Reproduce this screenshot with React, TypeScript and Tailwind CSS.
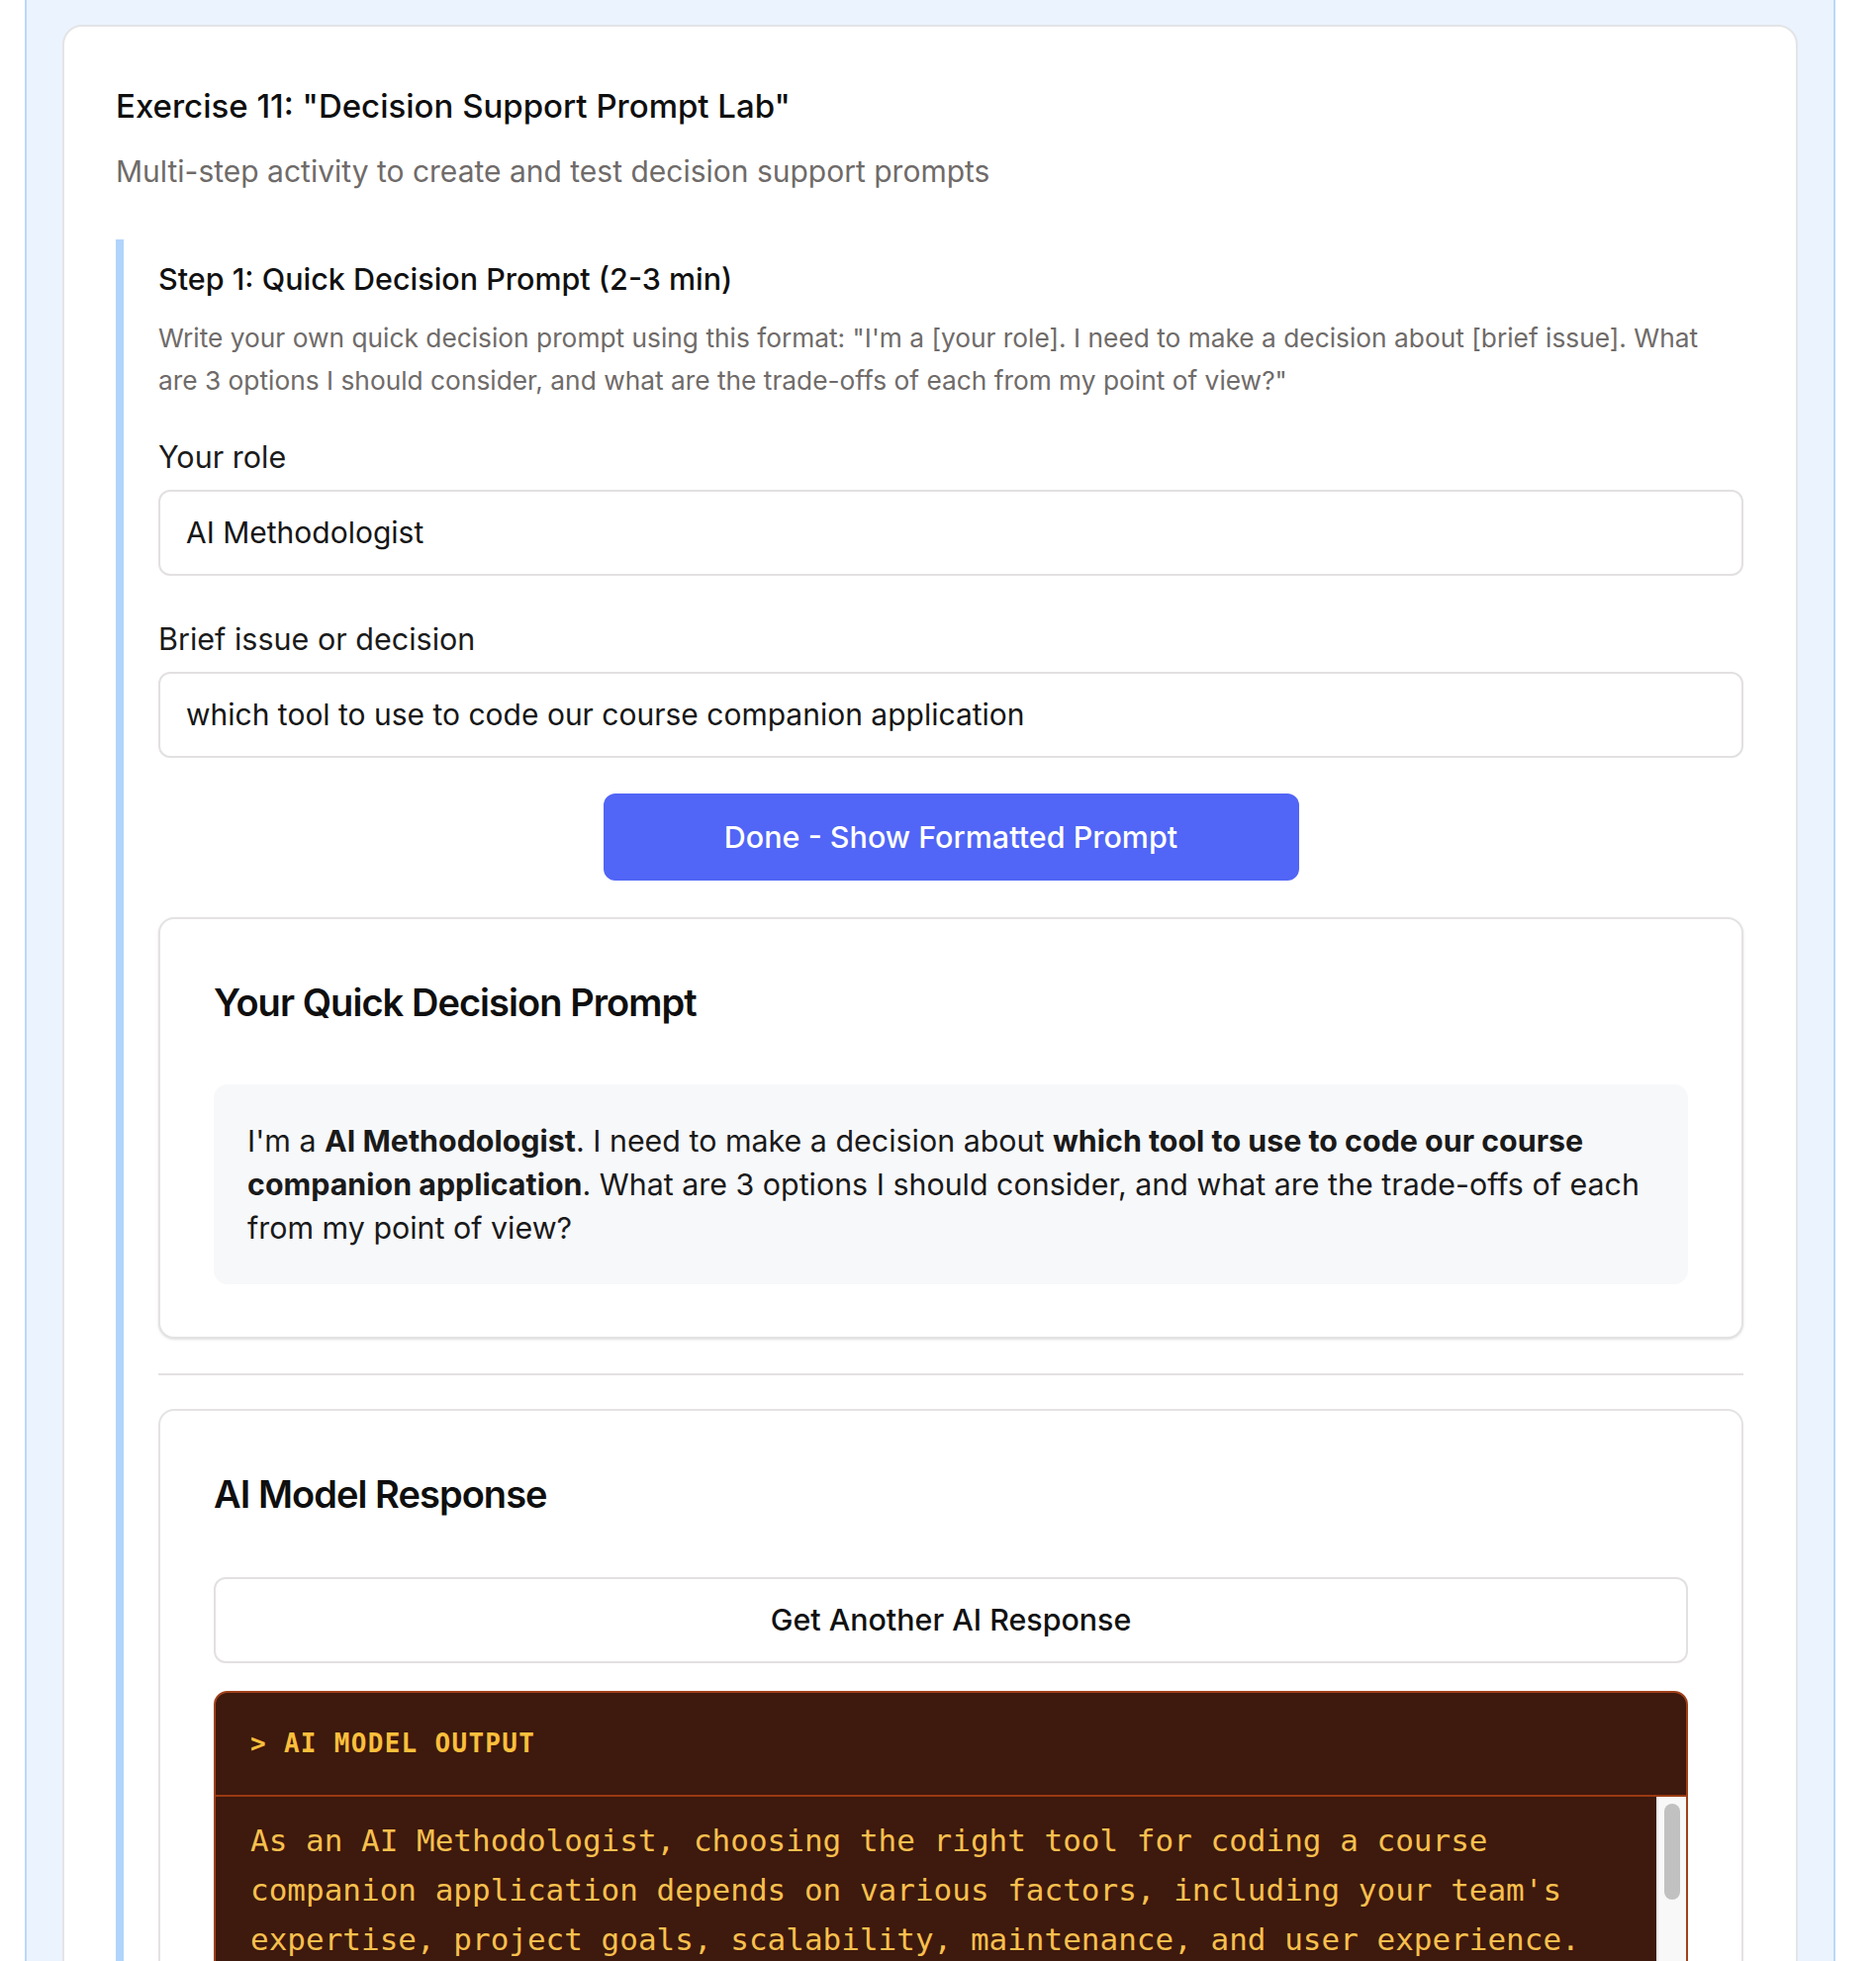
const aiResponse = `As an AI Methodologist, choosing the right tool for coding a course companion application depends on various factors, including your team's expertise, project goals, scalability, maintenance, and user experience.

Here are three options to consider, along with their trade-offs from your point of view:

1. No-code / low-code platforms (e.g., Bubble, Glide, FlutterFlow)
   - Pros: Fast prototyping, minimal engineering effort, and easy for the course team to iterate on content and flows.
   - Cons: Limited control over AI integrations, vendor lock-in, and possible scaling limits as usage grows.

2. Full-stack JavaScript framework (e.g., React / Next.js + Node)
   - Pros: Maximum flexibility, a rich ecosystem, and simple integration with LLM APIs, analytics and authentication.
   - Cons: Requires skilled developers, a longer build time, and ongoing maintenance.

3. AI-assisted coding environments (e.g., Cursor, Replit, Copilot)
   - Pros: Speeds up development and lets methodologists contribute code directly.
   - Cons: Generated code still needs review, and quality can vary.`;

function Field({ label, value }: { label: string; value: string }) {
  return (
    <div>
      <p className="text-[30.5px] leading-[36px] text-[#1b1b1b]">{label}</p>
      <div className="mt-[15px] flex h-[87px] items-center rounded-[12px] border-2 border-[#e3e0e1] bg-white pl-[26px] text-[30px] text-[#161616]">
        {value}
      </div>
    </div>
  );
}

function App() {
  return (
    <div className="h-[1982px] overflow-hidden bg-white font-['Inter',sans-serif]">
      <div className="ml-[25px] h-full w-[1830px] border-x-2 border-[#bcd7f7] bg-[#ebf3fe] px-[36px] pt-[25px]">
        <div className="rounded-[20px] border-2 border-[#e4e4e6] bg-white pl-[52px] pr-[53px] pt-[62px]">
          <h3 className="text-[33px] leading-[36px] font-medium text-[#0f0f0f]">
            Exercise 11: "Decision Support Prompt Lab"
          </h3>
          <p className="mt-[28px] text-[30px] leading-[40px] text-[#6f6b69]">
            Multi-step activity to create and test decision support prompts
          </p>

          <div className="mt-[49px] border-l-[8px] border-[#b0d4fb] pl-[35px] pt-[22px]">
            <h4 className="text-[30.5px] leading-[36px] font-medium text-[#111]">
              Step 1: Quick Decision Prompt (2-3 min)
            </h4>
            <p className="mt-[20px] text-[26.3px] leading-[43px] text-[#6f6b69]">
              Write your own quick decision prompt using this format: "I'm a [your role]. I need to make a decision about [brief issue]. What
              <br />
              are 3 options I should consider, and what are the trade-offs of each from my point of view?"
            </p>

            <div className="mt-[38px]">
              <Field label="Your role" value="AI Methodologist" />
            </div>
            <div className="mt-[46px]">
              <Field label="Brief issue or decision" value="which tool to use to code our course companion application" />
            </div>

            <button className="mx-auto mt-[36px] flex h-[88px] w-[703px] items-center justify-center rounded-[12px] bg-[#5165f6] text-[30.5px] font-medium text-white">
              Done - Show Formatted Prompt
            </button>

            <div className="mt-[37px] rounded-[16px] border-2 border-[#e4e2e3] bg-white px-[54px] pb-[53px] pt-[61px] shadow-sm">
              <h2 className="text-[38px] leading-[46px] font-semibold tracking-tight text-[#0f0f0f]">
                Your Quick Decision Prompt
              </h2>
              <div className="mt-[60px] rounded-[14px] bg-[#f7f8fa] px-[34px] py-[35px] text-[30.4px] leading-[44px] text-[#1a1a1a]">
                I'm a <span className="font-bold">AI Methodologist</span>. I need to make a decision about{" "}
                <span className="font-bold">which tool to use to code our course companion application</span>. What are 3
                options I should consider, and what are the trade-offs of each from my point of view?
              </div>
            </div>

            <div className="mt-[35px] h-[2px] bg-[#e4e1e2]" />

            <div className="mt-[34px] rounded-[16px] border-2 border-[#e4e2e3] bg-white px-[54px] pb-[52px] pt-[61px]">
              <h2 className="text-[38px] leading-[46px] font-semibold tracking-tight text-[#0f0f0f]">
                AI Model Response
              </h2>
              <button className="mt-[61px] flex h-[87px] w-full items-center justify-center rounded-[12px] border-2 border-[#e3e0e1] bg-white text-[30.4px] font-medium text-[#111]">
                Get Another AI Response
              </button>

              <div className="mt-[28px] overflow-hidden rounded-t-[14px] border-2 border-[#a0401a] bg-[#3e190d] font-['DejaVu_Sans_Mono',monospace]">
                <div className="flex h-[105px] items-center border-b-2 border-[#9a3a12] px-[35px] text-[26px] font-bold tracking-wider text-[#fbbf3c]">
                  &gt; AI MODEL OUTPUT
                </div>
                <div className="relative max-h-[400px] overflow-hidden">
                  <p className="whitespace-pre-wrap pb-[18px] pl-[35px] pr-[62px] pt-[19px] text-[31px] leading-[50px] text-[#f8c04e]">
                    {aiResponse}
                  </p>
                  {/* scrollbar */}
                  <div className="absolute inset-y-0 right-0 w-[30px] border-l-2 border-[#e6e6e6] bg-[#f8f8f8]">
                    <div className="absolute left-[6px] top-[7px] h-[97px] w-[16px] rounded-full bg-[#c1c1c1]" />
                  </div>
                </div>
              </div>
            </div>
          </div>
        </div>
      </div>
    </div>
  );
}

export default App;
